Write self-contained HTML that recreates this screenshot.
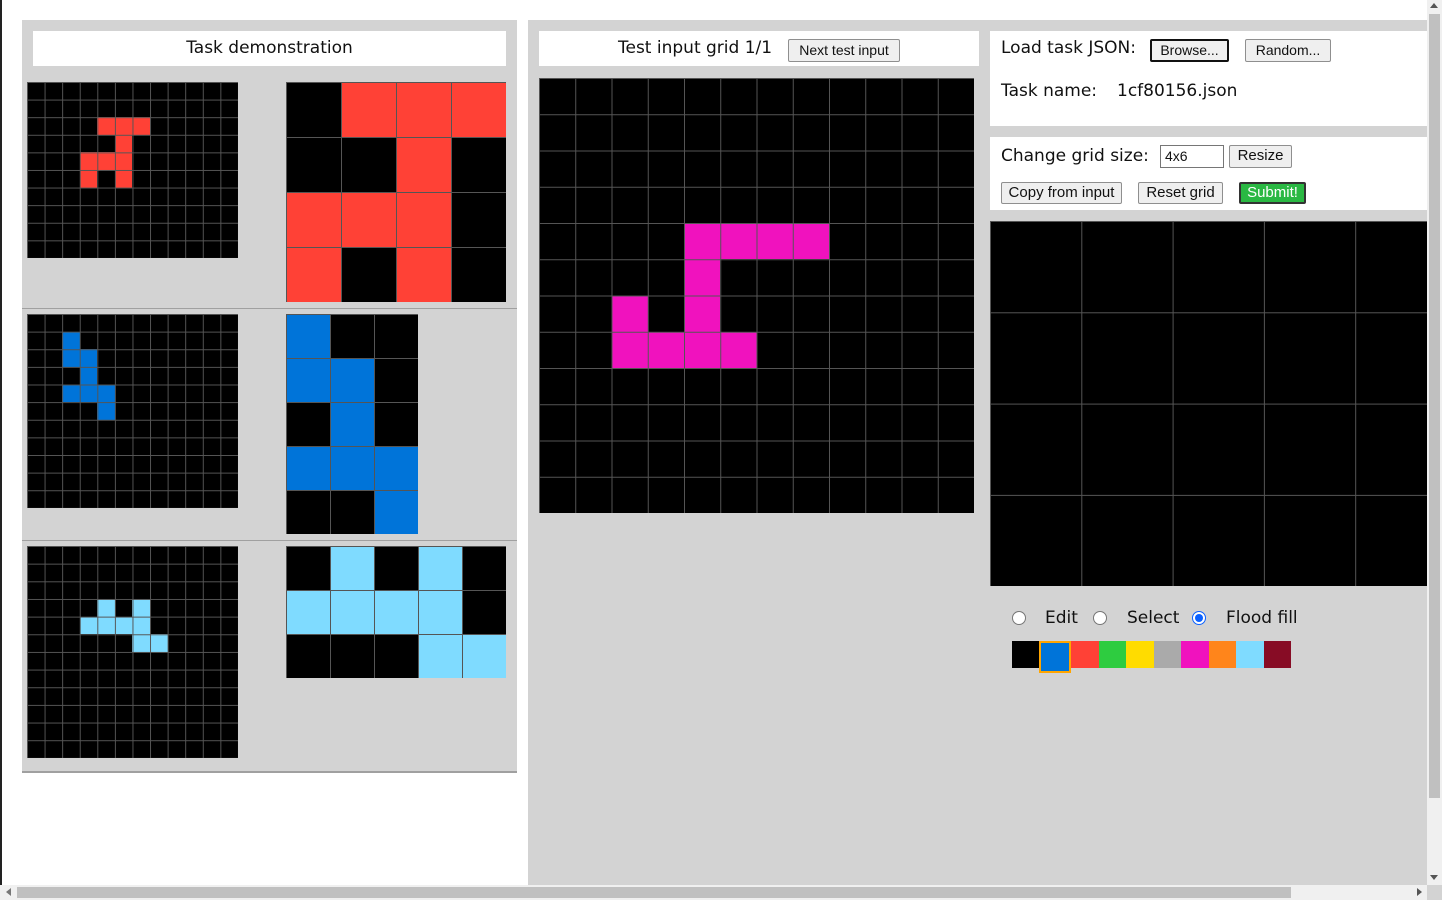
<!DOCTYPE html>
<html><head><meta charset="utf-8"><style>
*{box-sizing:border-box;margin:0;padding:0}
body{width:1442px;height:900px;overflow:hidden;background:#fff;position:relative;font-family:"DejaVu Sans","Liberation Sans",sans-serif;color:#111}
.a{position:absolute}
.g{position:absolute;background:#000;overflow:hidden}
.g::after{content:"";position:absolute;left:0;top:0;right:0;bottom:0;background-image:linear-gradient(to right,#555 1px,transparent 1px),linear-gradient(to bottom,#555 1px,transparent 1px);background-size:var(--w) var(--h)}
.g i{position:absolute;width:var(--w);height:var(--h);left:calc(var(--w)*var(--c));top:calc(var(--h)*var(--r))}
.R i{background:#FF4136}.B i{background:#0074D9}.C i{background:#7FDBFF}.M i{background:#F012BE}
.btn{position:absolute;font-family:"Liberation Sans",sans-serif;font-size:14px;background:#efefef;border:1px solid #8f8f8f;border-radius:2px;text-align:center;line-height:20px;color:#111}
.t{position:absolute;font-size:17px;white-space:nowrap}
.p{position:absolute;top:641px;height:27px}
.rad{position:absolute;width:14px;height:14px;border:1px solid #767676;border-radius:50%;background:#fff;top:611px}
</style></head><body>
<div class="a" style="left:0;top:0;width:2px;height:900px;background:#222"></div>
<!-- left panel -->
<div class="a" style="left:22px;top:20px;width:495px;height:753px;background:#d3d3d3;border-bottom:2px solid #a0a0a0"></div>
<div class="a" style="left:33px;top:31px;width:473px;height:35px;background:#fff"></div>
<div class="t" style="left:33px;top:38px;width:473px;text-align:center">Task demonstration</div>
<div class="a" style="left:22px;top:308px;width:495px;height:1px;background:#a0a0a0"></div>
<div class="a" style="left:22px;top:540px;width:495px;height:1px;background:#a0a0a0"></div>

<div class="g R" style="left:27px;top:82px;width:211px;height:176px;--w:17.58px;--h:17.6px">
<i style="--c:4;--r:2"></i><i style="--c:5;--r:2"></i><i style="--c:6;--r:2"></i><i style="--c:5;--r:3"></i><i style="--c:3;--r:4"></i><i style="--c:4;--r:4"></i><i style="--c:5;--r:4"></i><i style="--c:3;--r:5"></i><i style="--c:5;--r:5"></i></div>
<div class="g R" style="left:286px;top:82px;width:220px;height:220px;--w:55px;--h:55px">
<i style="--c:1;--r:0"></i><i style="--c:2;--r:0"></i><i style="--c:3;--r:0"></i><i style="--c:2;--r:1"></i><i style="--c:0;--r:2"></i><i style="--c:1;--r:2"></i><i style="--c:2;--r:2"></i><i style="--c:0;--r:3"></i><i style="--c:2;--r:3"></i></div>

<div class="g B" style="left:27px;top:314px;width:211px;height:194px;--w:17.58px;--h:17.64px">
<i style="--c:2;--r:1"></i><i style="--c:2;--r:2"></i><i style="--c:3;--r:2"></i><i style="--c:3;--r:3"></i><i style="--c:2;--r:4"></i><i style="--c:3;--r:4"></i><i style="--c:4;--r:4"></i><i style="--c:4;--r:5"></i></div>
<div class="g B" style="left:286px;top:314px;width:132px;height:220px;--w:44px;--h:44px">
<i style="--c:0;--r:0"></i><i style="--c:0;--r:1"></i><i style="--c:1;--r:1"></i><i style="--c:1;--r:2"></i><i style="--c:0;--r:3"></i><i style="--c:1;--r:3"></i><i style="--c:2;--r:3"></i><i style="--c:2;--r:4"></i></div>

<div class="g C" style="left:27px;top:546px;width:211px;height:212px;--w:17.58px;--h:17.67px">
<i style="--c:4;--r:3"></i><i style="--c:6;--r:3"></i><i style="--c:3;--r:4"></i><i style="--c:4;--r:4"></i><i style="--c:5;--r:4"></i><i style="--c:6;--r:4"></i><i style="--c:6;--r:5"></i><i style="--c:7;--r:5"></i></div>
<div class="g C" style="left:286px;top:546px;width:220px;height:132px;--w:44px;--h:44px">
<i style="--c:1;--r:0"></i><i style="--c:3;--r:0"></i><i style="--c:0;--r:1"></i><i style="--c:1;--r:1"></i><i style="--c:2;--r:1"></i><i style="--c:3;--r:1"></i><i style="--c:3;--r:2"></i><i style="--c:4;--r:2"></i></div>

<!-- middle panel -->
<div class="a" style="left:528px;top:20px;width:462px;height:865px;background:#d3d3d3"></div>
<div class="a" style="left:539px;top:31px;width:440px;height:35px;background:#fff"></div>
<div class="t" style="left:618px;top:38px">Test input grid 1/1</div>
<div class="btn" style="left:788px;top:39px;width:112px;height:23px">Next test input</div>
<div class="g M" style="left:539px;top:78px;width:435px;height:435px;--w:36.25px;--h:36.25px">
<i style="--c:4;--r:4"></i><i style="--c:5;--r:4"></i><i style="--c:6;--r:4"></i><i style="--c:7;--r:4"></i><i style="--c:4;--r:5"></i><i style="--c:2;--r:6"></i><i style="--c:4;--r:6"></i><i style="--c:2;--r:7"></i><i style="--c:3;--r:7"></i><i style="--c:4;--r:7"></i><i style="--c:5;--r:7"></i></div>

<!-- right panel -->
<div class="a" style="left:990px;top:20px;width:437px;height:865px;background:#d3d3d3"></div>
<div class="a" style="left:990px;top:31px;width:437px;height:95px;background:#fff"></div>
<div class="t" style="left:1001px;top:38px">Load task JSON:</div>
<div class="btn" style="left:1150px;top:39px;width:79px;height:23px;border:2px solid #111;line-height:19px">Browse...</div>
<div class="btn" style="left:1245px;top:39px;width:86px;height:23px">Random...</div>
<div class="t" style="left:1001px;top:81px">Task name:</div>
<div class="t" style="left:1117px;top:81px">1cf80156.json</div>
<div class="a" style="left:990px;top:137px;width:437px;height:73px;background:#fff"></div>
<div class="t" style="left:1001px;top:146px">Change grid size:</div>
<div class="a" style="left:1160px;top:145px;width:64px;height:23px;border:1px solid #767676;font-family:'Liberation Sans',sans-serif;font-size:14px;line-height:21px;padding-left:4px">4x6</div>
<div class="btn" style="left:1229px;top:145px;width:63px;height:23px;font-size:15px">Resize</div>
<div class="btn" style="left:1001px;top:182px;width:121px;height:22px;font-size:15px">Copy from input</div>
<div class="btn" style="left:1138px;top:182px;width:85px;height:22px;font-size:15px">Reset grid</div>
<div class="btn" style="left:1239px;top:182px;width:67px;height:22px;font-size:15px;background:#2ab843;color:#fff;border:2px solid #333;line-height:18px">Submit!</div>
<div class="g" style="left:990px;top:221px;width:437px;height:365px;--w:91.3px;--h:91.3px"></div>

<div class="rad" style="left:1012px"></div>
<div class="t" style="left:1045px;top:608px">Edit</div>
<div class="rad" style="left:1093px"></div>
<div class="t" style="left:1127px;top:608px">Select</div>
<div class="rad" style="left:1192px;border:1px solid #0b61ff"><div style="position:absolute;left:2px;top:2px;width:8px;height:8px;border-radius:50%;background:#0b61ff"></div></div>
<div class="t" style="left:1226px;top:608px">Flood fill</div>

<div class="p" style="left:1012px;width:27px;background:#000"></div>
<div class="p" style="left:1071px;width:28px;background:#FF4136"></div>
<div class="p" style="left:1099px;width:27px;background:#2ECC40"></div>
<div class="p" style="left:1126px;width:28px;background:#FFDC00"></div>
<div class="p" style="left:1154px;width:27px;background:#AAAAAA"></div>
<div class="p" style="left:1181px;width:28px;background:#F012BE"></div>
<div class="p" style="left:1209px;width:27px;background:#FF851B"></div>
<div class="p" style="left:1236px;width:28px;background:#7FDBFF"></div>
<div class="p" style="left:1264px;width:27px;background:#870C25"></div>
<div class="a" style="left:1039px;top:641px;width:32px;height:32px;background:#0074D9;border:2px solid #FFA500"></div>

<!-- scrollbars -->
<div class="a" style="left:1427px;top:0;width:15px;height:885px;background:#f0f0f0"></div>
<div class="a" style="left:1429px;top:14px;width:11px;height:784px;background:#c0c0c0"></div>
<div class="a" style="left:1430px;top:3px;width:0;height:0;border-left:4px solid transparent;border-right:4px solid transparent;border-bottom:5px solid #555"></div>
<div class="a" style="left:1430px;top:875px;width:0;height:0;border-left:4px solid transparent;border-right:4px solid transparent;border-top:5px solid #555"></div>
<div class="a" style="left:0;top:885px;width:1427px;height:15px;background:#f0f0f0"></div>
<div class="a" style="left:17px;top:887px;width:1274px;height:11px;background:#c0c0c0"></div>
<div class="a" style="left:6px;top:888px;width:0;height:0;border-top:4px solid transparent;border-bottom:4px solid transparent;border-right:5px solid #777"></div>
<div class="a" style="left:1417px;top:888px;width:0;height:0;border-top:4px solid transparent;border-bottom:4px solid transparent;border-left:5px solid #555"></div>
<div class="a" style="left:1427px;top:885px;width:15px;height:15px;background:#d3d3d3"></div>
</body></html>
